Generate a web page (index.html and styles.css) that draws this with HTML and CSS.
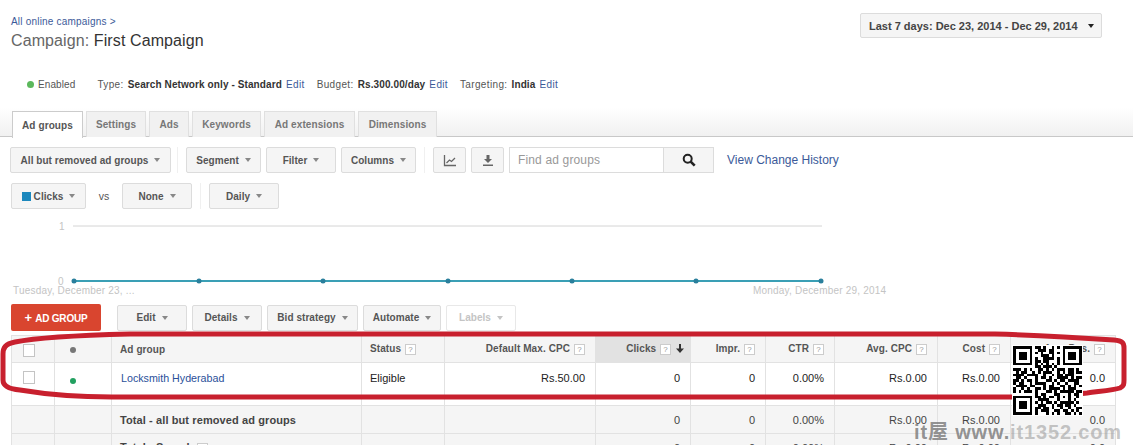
FILE: index.html
```html
<!DOCTYPE html>
<html lang="en">
<head>
  <meta charset="UTF-8" />
  <title>Campaign: First Campaign</title>
  <link rel="stylesheet" href="styles.css">
</head>
<body>

  <div class="top">
    <div>
      <a class="crumb" href="#">All online campaigns &gt;</a>
      <h1><span class="title-label">Campaign:</span> First Campaign</h1>
    </div>
    <button class="btn date-btn">Last 7 days: Dec 23, 2014 - Dec 29, 2014 <i class="caret caret-dark"></i></button>
  </div>

  <div class="summary">
    <span class="status-enabled"><i class="dot dot-light"></i>Enabled</span>
    <span class="item">Type: <b>Search Network only - Standard</b> <a href="#">Edit</a></span>
    <span class="item">Budget: <b>Rs.300.00/day</b> <a href="#">Edit</a></span>
    <span class="item">Targeting: <b>India</b> <a href="#">Edit</a></span>
  </div>

  <div class="tabs">
    <a class="tab tab-active w-adgroups" href="#">Ad groups</a>
    <a class="tab w-settings" href="#">Settings</a>
    <a class="tab w-ads" href="#">Ads</a>
    <a class="tab w-keywords" href="#">Keywords</a>
    <a class="tab w-ext" href="#">Ad extensions</a>
    <a class="tab w-dim" href="#">Dimensions</a>
  </div>

  <div class="toolbar">
    <button class="btn w-removed">All but removed ad groups <i class="caret"></i></button>
    <span class="sep sep-first"></span>
    <button class="btn w-75">Segment <i class="caret"></i></button>
    <button class="btn w-70">Filter <i class="caret"></i></button>
    <button class="btn w-75">Columns <i class="caret"></i></button>
    <span class="sep"></span>
    <button class="btn icon-btn">
      <svg width="14" height="13" viewBox="0 0 14 13" fill="none" stroke="#666" stroke-width="1.3"><path d="M1.5 1v10.5H13"/><path d="M3.5 9l3-3 2 1.5L12 4"/></svg>
    </button>
    <button class="btn icon-btn">
      <svg width="12" height="13" viewBox="0 0 12 13" fill="#666"><path d="M4.5 1h3v4H10L6 9 2 5h2.5z"/><path d="M1 10.500h10V12H1z"/></svg>
    </button>
    <div class="search">
      <input class="search-input" type="text" placeholder="Find ad groups">
      <button class="search-btn">
        <svg width="14" height="14" viewBox="0 0 14 14" fill="none" stroke="#222"><circle cx="5.700" cy="5.700" r="4" stroke-width="2"/><path d="M8.700 8.700l4 4" stroke-width="2.600"/></svg>
      </button>
    </div>
    <a class="history" href="#">View Change History</a>
  </div>

  <div class="toolbar toolbar-metrics">
    <button class="btn w-clicks"><i class="swatch"></i>Clicks <i class="caret"></i></button>
    <span class="vs">vs</span>
    <button class="btn w-70">None <i class="caret"></i></button>
    <span class="sep sep-short"></span>
    <button class="btn w-70">Daily <i class="caret"></i></button>
  </div>

  <div class="chart">
    <svg class="chart-svg" width="1133" height="86" viewBox="0 0 1133 86">
      <line x1="73" y1="9" x2="822" y2="9" stroke="#d4d4d4"/>
      <line x1="74" y1="64" x2="821" y2="64" stroke="#3a9fb5" stroke-width="2"/>
      <g fill="#2a7f9c">
        <circle cx="74" cy="64" r="2.500"/>
        <circle cx="199" cy="64" r="2.500"/>
        <circle cx="323" cy="64" r="2.500"/>
        <circle cx="448" cy="64" r="2.500"/>
        <circle cx="572" cy="64" r="2.500"/>
        <circle cx="696" cy="64" r="2.500"/>
        <circle cx="821" cy="64" r="2.500"/>
      </g>
      <g class="chart-text">
        <text x="59" y="13">1</text>
        <text x="58" y="68">0</text>
        <text x="13" y="77">Tuesday, December 23, ...</text>
        <text x="753" y="77">Monday, December 29, 2014</text>
      </g>
    </svg>
  </div>

  <div class="toolbar toolbar-actions">
    <button class="add-btn"><span class="plus">+</span> AD GROUP</button>
    <button class="btn w-70">Edit <i class="caret"></i></button>
    <button class="btn w-70">Details <i class="caret"></i></button>
    <button class="btn w-91">Bid strategy <i class="caret"></i></button>
    <button class="btn w-78">Automate <i class="caret"></i></button>
    <button class="btn btn-disabled w-70">Labels <i class="caret"></i></button>
  </div>

  <table class="grid">
    <colgroup>
      <col class="c-check"><col class="c-dot"><col class="c-name"><col class="c-status"><col class="c-cpc">
      <col class="c-clicks"><col class="c-impr"><col class="c-ctr"><col class="c-avg"><col class="c-cost"><col class="c-pos">
    </colgroup>
    <thead>
      <tr>
        <th><i class="check"></i></th>
        <th class="dot-cell"><i class="dot dot-gray"></i></th>
        <th>Ad group</th>
        <th>Status <i class="help">?</i></th>
        <th class="num">Default Max. CPC <i class="help">?</i></th>
        <th class="num sorted">Clicks <i class="help">?</i>
          <svg class="arrow" width="8" height="9" viewBox="0 0 8 9" fill="#333"><path d="M3 0h2v4.500h3L4 9 0 4.500h3z"/></svg>
        </th>
        <th class="num">Impr. <i class="help">?</i></th>
        <th class="num">CTR <i class="help">?</i></th>
        <th class="num">Avg. CPC <i class="help">?</i></th>
        <th class="num">Cost <i class="help">?</i></th>
        <th class="num">Avg. Pos. <i class="help">?</i></th>
      </tr>
    </thead>
    <tbody>
      <tr class="row-main">
        <td><i class="check"></i></td>
        <td class="dot-cell"><i class="dot dot-green"></i></td>
        <td><a class="name-link" href="#">Locksmith Hyderabad</a></td>
        <td>Eligible</td>
        <td class="num">Rs.50.00</td>
        <td class="num">0</td>
        <td class="num">0</td>
        <td class="num">0.00%</td>
        <td class="num">Rs.0.00</td>
        <td class="num">Rs.0.00</td>
        <td class="num">0.0</td>
      </tr>
      <tr class="row-total">
        <td></td><td></td>
        <td class="total-label">Total - all but removed ad groups</td>
        <td></td><td></td>
        <td class="num">0</td>
        <td class="num">0</td>
        <td class="num">0.00%</td>
        <td class="num">Rs.0.00</td>
        <td class="num">Rs.0.00</td>
        <td class="num">0.0</td>
      </tr>
      <tr class="row-total">
        <td></td><td></td>
        <td class="total-label">Total - Search <i class="help">?</i></td>
        <td></td><td></td>
        <td class="num">0</td>
        <td class="num">0</td>
        <td class="num">0.00%</td>
        <td class="num">Rs.0.00</td>
        <td class="num">Rs.0.00</td>
        <td class="num">0.0</td>
      </tr>
    </tbody>
  </table>

  <!-- hand drawn highlight round the table rows -->
  <svg class="marker" width="1133" height="80" viewBox="0 0 1133 80" fill="none">
    <path d="M130 8C90 9 40 11 15 16C5 18 3 22 3 28V54C3 60 8 63 20 64C50 69 80 71 112 71H1040C1060 70 1075 68 1087 67C1102 65 1114 64 1120 62C1124 60 1124 58 1124 54V22C1124 16 1122 15 1114 14C1072 11 1032 9 995 8H130z" stroke="#c8202e" stroke-width="5"/>
  </svg>

  <svg class="qr" width="71" height="71" viewBox="-0.400 -0.400 25.800 25.800" shape-rendering="crispEdges">
    <rect x="-0.400" y="-0.400" width="25.800" height="25.800" fill="#fff"/>
    <path stroke="#000" d="M0 .5h7M8 .5h2M11 .5h1M14 .5h1M16 .5h1M18 .5h7
M0 1.500h1M6 1.500h1M9 1.500h3M13 1.500h2M18 1.500h1M24 1.500h1
M0 2.500h1M2 2.500h3M6 2.500h1M8 2.500h1M10 2.500h1M13 2.500h2M16 2.500h1M18 2.500h1M20 2.500h3M24 2.500h1
M0 3.500h1M2 3.500h3M6 3.500h1M10 3.500h3M14 3.500h1M18 3.500h1M20 3.500h3M24 3.500h1
M0 4.500h1M2 4.500h3M6 4.500h1M8 4.500h1M11 4.500h4M16 4.500h1M18 4.500h1M20 4.500h3M24 4.500h1
M0 5.500h1M6 5.500h1M8 5.500h2M11 5.500h2M16 5.500h1M18 5.500h1M24 5.500h1
M0 6.500h7M8 6.500h1M10 6.500h1M12 6.500h1M14 6.500h1M16 6.500h1M18 6.500h7
M8 7.500h2M11 7.500h3M15 7.500h1
M0 8.500h3M4 8.500h1M6 8.500h1M9 8.500h2M12 8.500h1M14 8.500h1M16 8.500h3M20 8.500h2M23 8.500h1
M1 9.500h1M3 9.500h2M7 9.500h1M9 9.500h1M11 9.500h3M16 9.500h1M18 9.500h1M20 9.500h2M23 9.500h2
M0 10.500h4M5 10.500h4M11 10.500h1M14 10.500h1M16 10.500h2M19 10.500h3
M1 11.500h2M4 11.500h1M8 11.500h1M10 11.500h2M13 11.500h1M16 11.500h4M21 11.500h1M23 11.500h2
M0 12.500h2M3 12.500h1M5 12.500h2M8 12.500h1M12 12.500h2M15 12.500h1M17 12.500h2M20 12.500h4
M0 13.500h1M2 13.500h2M6 13.500h1M8 13.500h4M14 13.500h1M16 13.500h1M19 13.500h1M22 13.500h2
M1 14.500h4M6 14.500h2M11 14.500h1M13 14.500h2M17 14.500h2M20 14.500h1M22 14.500h1M24 14.500h1
M0 15.500h1M3 15.500h1M5 15.500h1M8 15.500h2M11 15.500h1M13 15.500h4M18 15.500h1M20 15.500h3
M0 16.500h1M2 16.500h1M4 16.500h3M8 16.500h1M12 16.500h2M15 16.500h1M17 16.500h5M23 16.500h2
M8 17.500h1M10 17.500h2M15 17.500h2M20 17.500h1M22 17.500h2
M0 18.500h7M8 18.500h2M11 18.500h1M13 18.500h2M16 18.500h1M18 18.500h1M20 18.500h1M23 18.500h1
M0 19.500h1M6 19.500h1M9 19.500h4M16 19.500h1M20 19.500h1M22 19.500h1
M0 20.500h1M2 20.500h3M6 20.500h1M8 20.500h1M10 20.500h1M12 20.500h2M15 20.500h1M17 20.500h5M23 20.500h1
M0 21.500h1M2 21.500h3M6 21.500h1M9 21.500h3M14 21.500h1M16 21.500h2M19 21.500h2M22 21.500h1
M0 22.500h1M2 22.500h3M6 22.500h1M8 22.500h2M11 22.500h2M14 22.500h1M17 22.500h1M20 22.500h1M23 22.500h2
M0 23.500h1M6 23.500h1M8 23.500h1M10 23.500h3M15 23.500h2M18 23.500h2M21 23.500h1M23 23.500h1
M0 24.500h7M8 24.500h1M12 24.500h1M14 24.500h1M16 24.500h1M19 24.500h2M22 24.500h1M24 24.500h1"/>
  </svg>

  <div class="watermark">it屋 www.<span class="watermark-faint">it1352.com</span></div>

</body>
</html>
```

FILE: styles.css
```css
* {
  box-sizing: border-box;
}

html, body {
  margin: 0;
  height: 445px;
  overflow: hidden;
}

body {
  position: relative;
  background: #fff;
  font-family: "Liberation Sans", Arial, sans-serif;
  font-size: 11px;
  color: #333;
}

a {
  color: #3b5a99;
  text-decoration: none;
}

.top {
  display: flex;
  justify-content: space-between;
  padding: 13px 31px 0 11px;
  height: 77px;
}

.crumb {
  display: block;
  font-size: 10px;
  letter-spacing: 0.2px;
  line-height: 14px;
  margin-top: 2px;
}

h1 {
  margin: 1px 0 0;
  font-size: 16px;
  font-weight: normal;
  line-height: 22px;
  color: #333;
  letter-spacing: 0.1px;
}

.title-label {
  color: #666;
}

.btn {
  display: inline-flex;
  align-items: center;
  justify-content: center;
  height: 26px;
  padding: 0;
  border: 1px solid #dcdcdc;
  border-radius: 2px;
  background: #f5f5f5;
  font-family: inherit;
  font-size: 10px;
  font-weight: bold;
  letter-spacing: 0.05px;
  color: #555;
}

.date-btn {
  width: 242px;
  height: 25px;
  font-size: 11px;
  letter-spacing: 0;
  justify-content: flex-start;
  padding-left: 8px;
  color: #444;
}

.caret {
  display: inline-block;
  margin-left: 6px;
  border: 3.500px solid transparent;
  border-top: 4px solid #888;
  border-bottom: 0;
}

.caret-dark {
  margin-left: 10px;
  border-top-color: #222;
}

.summary {
  display: flex;
  align-items: center;
  height: 14px;
  font-size: 10px;
  letter-spacing: 0.1px;
  color: #555;
  padding-left: 27px;
  gap: 12px;
}

.item {
  letter-spacing: 0.35px;
}

.summary b {
  margin: 0 1px;
  letter-spacing: 0.1px;
  color: #333;
}

.status-enabled {
  margin-right: 10px;
}

.dot {
  display: inline-block;
  width: 7px;
  height: 7px;
  border-radius: 50%;
}

.dot-light {
  background: #5cb85c;
  margin-right: 4px;
}

.dot-gray {
  width: 6px;
  height: 6px;
  background: #777;
}

.dot-green {
  width: 6px;
  height: 6px;
  background: #22a060;
  margin-top: 12px;
}

.tabs {
  display: flex;
  gap: 3px;
  height: 41px;
  margin-top: 5px;
  padding: 15px 0 0 12px;
  border-bottom: 1px solid #c8c8c8;
  background: linear-gradient(to bottom, #fff 0, #fff 30%, #f1f1f1 100%);
}

.tab {
  display: flex;
  align-items: center;
  justify-content: center;
  height: 26px;
  border: 1px solid #e0e0e0;
  border-bottom: 0;
  background: #f1f1f1;
  font-size: 10px;
  font-weight: bold;
  letter-spacing: 0.1px;
  color: #777;
}

.tab-active {
  height: 27px;
  border-color: #ccc;
  background: #fff;
  color: #555;
}

.w-adgroups { width: 71px; }
.w-settings { width: 60px; }
.w-ads { width: 40px; }
.w-keywords { width: 69px; }
.w-ext { width: 91px; }
.w-dim { width: 79px; }

.toolbar {
  display: flex;
  align-items: center;
  gap: 5px;
  padding-left: 10px;
  margin-top: 10px;
}

.toolbar-metrics {
  margin-top: 10px;
  padding-left: 11px;
}

.w-removed { width: 161px; }
.w-70 { width: 70px; }
.w-75 { width: 75px; }
.w-78 { width: 78px; }
.w-91 { width: 91px; }
.w-clicks { width: 75px; }

.sep {
  width: 1px;
  height: 26px;
  margin: 0 3px;
  background: #f0f0f0;
}

.sep-first {
  margin: 0 3px 0 1px;
}

.icon-btn {
  width: 33px;
}

.search {
  display: flex;
  height: 26px;
}

.search-input {
  width: 155px;
  height: 26px;
  padding: 0 8px;
  border: 1px solid #dcdcdc;
  font-family: inherit;
  font-size: 12px;
  letter-spacing: 0.15px;
  outline: none;
}

.search-input::placeholder {
  color: #999;
}

.search-btn {
  display: flex;
  align-items: center;
  justify-content: center;
  width: 50px;
  height: 26px;
  padding: 0;
  border: 1px solid #dcdcdc;
  border-left: 0;
  background: #f5f5f5;
}

.history {
  margin-left: 8px;
  font-size: 12px;
}

.swatch {
  width: 9px;
  height: 9px;
  margin-right: 3px;
  background: #1c88bd;
}

.vs {
  width: 26px;
  text-align: center;
  font-size: 10.500px;
  color: #555;
}

.chart {
  height: 87px;
  margin-top: 8px;
}

.chart-svg {
  display: block;
}

.chart-text {
  font-size: 10px;
  letter-spacing: 0.2px;
  fill: #c4c4c4;
}

.toolbar-actions {
  margin-top: 0;
  padding-left: 11px;
}

.add-btn {
  width: 90px;
  height: 27px;
  margin-right: 11px;
  border: 0;
  border-radius: 2px;
  background: #d9452f;
  color: #fff;
  font-family: inherit;
  font-size: 10px;
  font-weight: bold;
  letter-spacing: -0.2px;
  padding: 0;
}

.plus {
  font-size: 13px;
  margin-right: 1px;
}

.btn-disabled {
  background: #fff;
  border-color: #e8e8e8;
  color: #c4c4c4;
}

.btn-disabled .caret {
  border-top-color: #c4c4c4;
}

.grid {
  width: 1104px;
  margin: 4px 0 0 11px;
  border-collapse: collapse;
  table-layout: fixed;
  font-size: 11px;
}

.c-check { width: 43px; }
.c-dot { width: 57px; }
.c-name { width: 250px; }
.c-status { width: 83px; }
.c-cpc { width: 151px; }
.c-clicks { width: 95px; }
.c-impr { width: 75px; }
.c-ctr { width: 69px; }
.c-avg { width: 103px; }
.c-cost { width: 73px; }
.c-pos { width: 105px; }

.grid th,
.grid td {
  border: 1px solid #e2e2e2;
  padding: 0 10px 0 8px;
  white-space: nowrap;
  overflow: hidden;
}

.grid th {
  height: 27px;
  background: #f5f5f5;
  font-size: 10px;
  letter-spacing: 0.1px;
  text-align: left;
  color: #555;
}

.grid .dot-cell {
  padding-left: 15px;
}

.grid .num {
  text-align: right;
}

.grid .sorted {
  padding-right: 6px;
  background: #e2e2e2;
}

.arrow {
  margin-left: 2px;
  vertical-align: -1px;
}

.help {
  display: inline-block;
  width: 11px;
  height: 11px;
  border: 1px solid #ccc;
  background: #fff;
  font-style: normal;
  font-size: 8px;
  font-weight: normal;
  line-height: 9px;
  text-align: center;
  color: #999;
  margin-left: 1px;
}

.check {
  display: block;
  width: 12px;
  height: 13px;
  margin: 2px 0 0 3px;
  border: 1px solid #c4c4c4;
  background: #fff;
}

.row-main td {
  height: 43px;
  padding-top: 3px;
  vertical-align: top;
  line-height: 24px;
  color: #222;
  font-size: 11px;
}

.row-main .check {
  margin-top: 5px;
}

.name-link {
  display: inline-block;
  padding-left: 1px;
  color: #2a4f9a;
  font-size: 10.700px;
}

.row-total td {
  height: 28px;
  background: #f5f5f5;
  font-size: 11px;
  color: #444;
}

.grid .total-label {
  font-weight: bold;
  letter-spacing: 0.1px;
}

.marker {
  position: absolute;
  left: 0;
  top: 326px;
  pointer-events: none;
}

.qr {
  position: absolute;
  left: 1012px;
  top: 345px;
}

.watermark {
  position: absolute;
  left: 914px;
  top: 416px;
  font-family: "Liberation Sans", "Noto Sans CJK SC", sans-serif;
  font-size: 20px;
  font-weight: bold;
  letter-spacing: 0.85px;
  color: rgba(120, 120, 120, 0.8);
  white-space: nowrap;
}

.watermark-faint {
  color: rgba(150, 150, 150, 0.55);
}
```
